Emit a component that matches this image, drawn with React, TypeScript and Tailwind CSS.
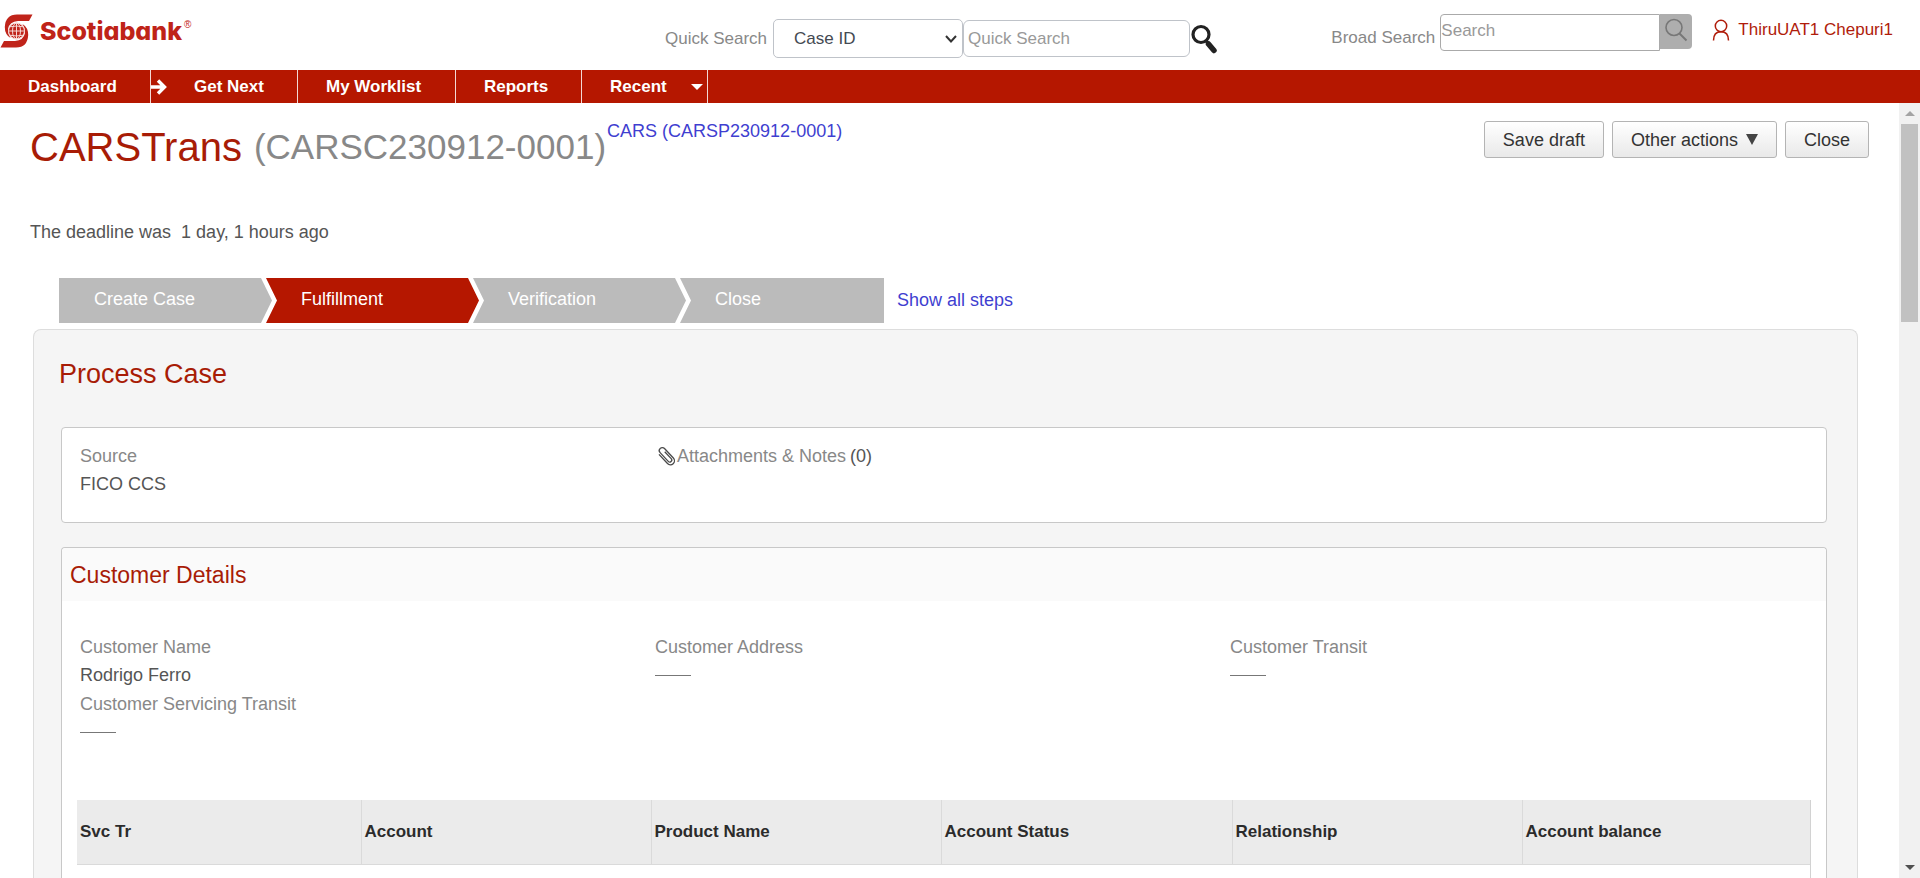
import React from "react";

const navItems = [
  { label: "Dashboard", box: "w-[151px] pl-7" },
  { label: "Get Next", box: "w-[147px]", icon: "arrow" },
  { label: "My Worklist", box: "w-[158px] pl-7" },
  { label: "Reports", box: "w-[126px] pl-7" },
  { label: "Recent", box: "w-[126px] pl-7", icon: "caret" },
];

const columns = [
  { label: "Svc Tr", width: "w-[284px]" },
  { label: "Account", width: "w-[290px]" },
  { label: "Product Name", width: "w-[290px]" },
  { label: "Account Status", width: "w-[291px]" },
  { label: "Relationship", width: "w-[290px]" },
  { label: "Account balance", width: "" },
];

const first = "w-[213px] [clip-path:polygon(0_0,calc(100%-11px)_0,100%_50%,calc(100%-11px)_100%,0_100%)]";
const middle =
  "-ml-1.5 w-[213px] [clip-path:polygon(0_0,calc(100%-11px)_0,100%_50%,calc(100%-11px)_100%,0_100%,11px_50%)]";
const last = "-ml-1.5 w-[204px] [clip-path:polygon(0_0,100%_0,100%_100%,0_100%,11px_50%)]";

const steps = [
  { label: "Create Case", shape: first, color: "bg-[#bbbbbb]" },
  { label: "Fulfillment", shape: middle, color: "bg-[#b51700]" },
  { label: "Verification", shape: middle, color: "bg-[#bbbbbb]" },
  { label: "Close", shape: last, color: "bg-[#bbbbbb]" },
];

function Logo() {
  return (
    <a href="#home" className="flex items-center" aria-label="Scotiabank">
      <svg viewBox="0 0 33 34" className="h-[34px] w-[33px]" aria-hidden="true">
        <g fill="#c0241a">
          <path d="M32.500 .500L29 7H18Q9.500 7.500 8 15Q7.800 20 10.500 24Q4.800 20.500 4.800 13Q5.500 .500 17 .500Z" />
          <path d="M.500 33.500L4 27H15Q23.500 26.500 25 19Q25.200 14 22.500 10Q28.200 13.500 28.200 21Q27.500 33.500 16 33.500Z" />
          <circle cx="16.500" cy="17" r="7.800" />
        </g>
        <g fill="none" stroke="#f6d8d4" strokeWidth="1">
          <circle cx="16.500" cy="17" r="8" />
          <ellipse cx="16.500" cy="17" rx="4" ry="8" />
          <path d="M16.500 9v16M8.500 17h16M10 12.800q6.500-1.600 13 0M10 21.200q6.500 1.600 13 0" />
        </g>
      </svg>
      <span className="ml-[7px] font-[Inter,sans-serif] text-[25px] leading-8 font-extrabold text-[#bf2318] [font-feature-settings:'cv11']">
        Scotiabank
      </span>
      <span className="mb-3 ml-0.5 text-[10px] leading-3 text-[#bf2318]">®</span>
    </a>
  );
}

function Field({ label, value }: { label: string; value?: string }) {
  return (
    <div className="flex flex-col gap-1">
      <dt className="leading-6 text-[#888888]">{label}</dt>
      <dd className="h-6 leading-6 text-[#555555]">
        {value ?? <span className="mt-3 block w-9 border-t border-[#777777]" />}
      </dd>
    </div>
  );
}

const actionClass =
  "flex h-[37px] items-center rounded-[3px] border border-[#b4b4b4] bg-linear-to-b from-white to-[#e9e9e9] px-[18px] text-[#333333]";

export default function App() {
  return (
    <div className="flex h-screen flex-col bg-white font-['Liberation_Sans',Arial,sans-serif] text-[17px] leading-6 text-[#555555]">
      <header className="flex h-[70px] flex-none items-start">
        <div className="w-[665px] flex-none pt-[14px]">
          <Logo />
        </div>
        <form className="flex items-center pt-[19px]" onSubmit={(e) => e.preventDefault()}>
          <label htmlFor="quick-kind" className="w-[108px] whitespace-nowrap text-[#888888]">
            Quick Search
          </label>
          <div className="relative">
            <select
              id="quick-kind"
              className="block h-[39px] w-[190px] appearance-none rounded-[5px] border border-[#bfc3c9] bg-white pl-5 text-[#444a52]"
            >
              <option>Case ID</option>
            </select>
            <svg viewBox="0 0 12 8" className="pointer-events-none absolute top-4 right-1.5 h-2 w-3" aria-hidden="true">
              <path d="M1 1l5 5.500L11 1" fill="none" stroke="#333" strokeWidth="2" />
            </svg>
          </div>
          <input
            aria-label="Quick Search"
            placeholder="Quick Search"
            className="h-[37px] w-[227px] rounded-[6px] border border-[#bfc3c9] px-1 placeholder:text-[#999999]"
          />
          <button type="submit" aria-label="Run quick search" className="flex">
            <svg viewBox="0 0 28 30" className="h-[30px] w-7" aria-hidden="true">
              <circle cx="11" cy="10.500" r="8" fill="none" stroke="#222" strokeWidth="3.200" />
              <path d="M16.500 17.500L18.500 20" stroke="#222" strokeWidth="3" />
              <path d="M18.500 20L24 26.500" stroke="#222" strokeWidth="5.500" strokeLinecap="round" />
            </svg>
          </button>
        </form>
        <form className="ml-auto flex items-start pt-[14px]" onSubmit={(e) => e.preventDefault()}>
          <label htmlFor="broad" className="mt-3 w-[109px] whitespace-nowrap text-[#888888]">
            Broad Search
          </label>
          <input
            id="broad"
            placeholder="Search"
            className="h-[37px] w-[220px] rounded-l-[4px] border border-[#aaaaaa] pb-1 placeholder:text-[#999999]"
          />
          <button type="submit" aria-label="Search" className="flex h-[35px] w-8 items-center justify-center rounded-r-[4px] bg-[#aeaeae] pb-1">
            <svg viewBox="0 0 24 24" className="h-6 w-6" fill="none" stroke="#777" strokeWidth="1.600" aria-hidden="true">
              <circle cx="10" cy="9.500" r="8" />
              <path d="M15.500 15.500l7 7" strokeWidth="2" />
            </svg>
          </button>
        </form>
        <a href="#profile" className="mt-[18px] mr-[27px] ml-5 flex items-center gap-2 whitespace-nowrap text-[#b01c0a]">
          <svg viewBox="0 0 18 22" className="h-[22px] w-[18px]" fill="none" stroke="#b01c0a" strokeWidth="1.500" aria-hidden="true">
            <circle cx="9" cy="7" r="5.700" />
            <path d="M1.500 21.500c0-5 2.500-8.700 7.500-8.700s7.500 3.700 7.500 8.700" />
          </svg>
          ThiruUAT1 Chepuri1
        </a>
      </header>

      <nav className="flex h-[33px] flex-none bg-[#b51700] font-bold text-white">
        {navItems.map((item) => (
          <a
            key={item.label}
            href={"#" + item.label}
            className={"flex items-center border-r border-[#f3d9d4] whitespace-nowrap " + item.box}
          >
            {item.icon === "arrow" && (
              <svg viewBox="0 0 16 16" className="mr-[27px] h-4 w-4" fill="none" stroke="#fff" strokeWidth="3.400" aria-hidden="true">
                <path d="M0 8h13M7 1.500L13.500 8 7 14.500" />
              </svg>
            )}
            {item.label}
            {item.icon === "caret" && (
              <svg viewBox="0 0 12 6" className="mr-1 ml-auto h-1.5 w-3" fill="#fff" aria-hidden="true">
                <path d="M0 0h12L6 6z" />
              </svg>
            )}
          </a>
        ))}
      </nav>

      <div className="flex min-h-0 flex-1 text-[18px] leading-6">
        <main className="flex-1 overflow-hidden pt-4">
          <div className="flex h-[52px] items-start pr-[30px] pl-[30px]">
            <h1 className="mt-1 flex gap-3 text-[40px] leading-[48px] whitespace-nowrap text-[#a81c06]">
              CARSTrans
              <span className="text-[35px] text-[#888888]">(CARSC230912-0001)</span>
            </h1>
            <a href="#parent" className="ml-px whitespace-nowrap text-[#3f3fd0]">
              CARS (CARSP230912-0001)
            </a>
            <div className="mt-0.5 ml-auto flex gap-2">
              <button type="button" className={actionClass}>
                Save draft
              </button>
              <button type="button" className={actionClass + " gap-2"}>
                Other actions
                <svg viewBox="0 0 12 11" className="h-[11px] w-3" fill="#444" aria-hidden="true">
                  <path d="M0 0h12L6 11z" />
                </svg>
              </button>
              <button type="button" className={actionClass}>
                Close
              </button>
            </div>
          </div>

          <p className="mt-[49px] flex gap-2.5 pl-[30px]">
            <span>The deadline was</span>
            <span>1 day, 1 hours ago</span>
          </p>

          <div className="mt-[34px] flex pl-[59px]">
            <ol className="flex h-[45px] text-white">
              {steps.map((step) => (
                <li key={step.label} className={"pt-[9px] pl-[35px] " + step.shape + " " + step.color}>
                  {step.label}
                </li>
              ))}
            </ol>
            <a href="#steps" className="mt-2.5 ml-[13px] text-[#3f3fd0]">
              Show all steps
            </a>
          </div>

          <section className="mt-1.5 mr-[41px] ml-[33px] rounded-t-lg border border-b-0 border-[#dddddd] bg-[#f5f5f5] pt-7 pr-[30px] pl-[27px]">
            <h2 className="-ml-0.5 text-[27px] leading-8 text-[#a81c06]">Process Case</h2>

            <div className="mt-[37px] grid h-24 grid-cols-[575px_575px_1fr] rounded border border-[#c8c8c8] bg-white pt-4 pl-[18px]">
              <dl>
                <Field label="Source" value="FICO CCS" />
              </dl>
              <div className="flex h-6 items-center whitespace-nowrap">
                <svg viewBox="0 0 22 22" className="h-[22px] w-[22px]" fill="none" stroke="#4a4a4a" strokeWidth="1.300" aria-hidden="true">
                  <g transform="rotate(-43 11 11)">
                    <path d="M7 5v12.500a4 4 0 0 0 8 0V4.500a3 3 0 0 0-6 0V16.500a2 2 0 0 0 4 0V7" />
                  </g>
                </svg>
                <a href="#attachments" className="text-[#888888]">
                  Attachments &amp; Notes
                </a>
                <span className="ml-1">(0)</span>
              </div>
            </div>

            <div className="mt-6 rounded-t border border-b-0 border-[#c8c8c8] bg-white">
              <h3 className="flex h-[53px] items-center rounded-t bg-[#fafafa] pl-2 text-[23px] leading-6 text-[#a81c06]">
                Customer Details
              </h3>
              <dl className="grid grid-cols-[575px_575px_1fr] gap-y-[5px] pt-[34px] pl-[18px]">
                <Field label="Customer Name" value="Rodrigo Ferro" />
                <Field label="Customer Address" />
                <Field label="Customer Transit" />
                <Field label="Customer Servicing Transit" />
              </dl>
              <div className="mt-14 mr-[15px] ml-[15px] border-r border-[#d2d2d2]">
                <table className="w-full table-fixed border-collapse text-[17px]">
                  <thead>
                    <tr className="h-16 bg-[#ebebeb] text-left text-[#2b2b2b]">
                      {columns.map((column) => (
                        <th
                          key={column.label}
                          className={"border-r border-b border-[#dadada] pl-[3px] font-bold last:border-r-0 " + column.width}
                        >
                          {column.label}
                        </th>
                      ))}
                    </tr>
                  </thead>
                  <tbody>
                    <tr className="h-12">
                      <td colSpan={6} />
                    </tr>
                  </tbody>
                </table>
              </div>
            </div>
          </section>
        </main>

        <div className="flex w-[21px] flex-none flex-col items-center bg-[#f1f1f1] py-2" aria-hidden="true">
          <svg viewBox="0 0 10 5" className="h-[5px] w-2.5" fill="#a3a3a3">
            <path d="M5 0l5 5H0z" />
          </svg>
          <div className="mt-2 h-[198px] w-[17px] bg-[#c1c1c1]" />
          <svg viewBox="0 0 10 5" className="mt-auto h-[5px] w-2.5" fill="#505050">
            <path d="M0 0h10L5 5z" />
          </svg>
        </div>
      </div>
    </div>
  );
}
